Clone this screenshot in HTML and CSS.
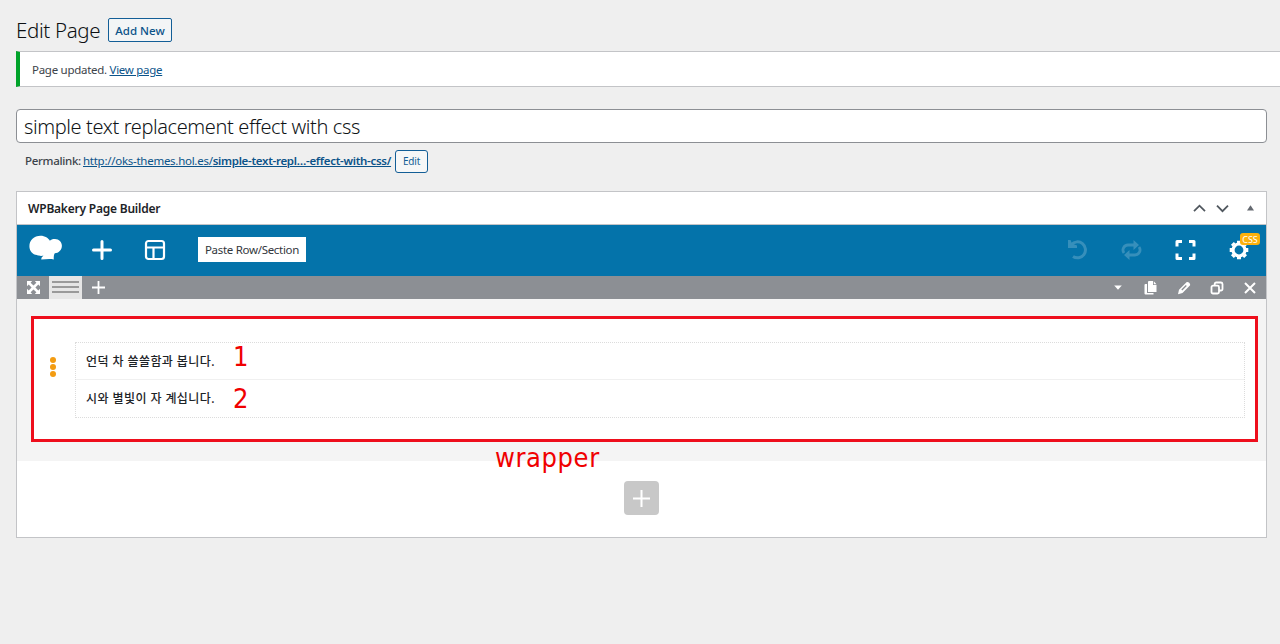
FILE: index.html
```html
<!DOCTYPE html>
<html lang="ko">
<head>
  <meta charset="UTF-8">
  <meta name="viewport" content="width=device-width, initial-scale=1.0">
  <title>Edit Page</title>
  <link rel="stylesheet" href="styles.css">
</head>
<body>
  <div class="heading">
    <h1>Edit Page</h1>
    <a class="add-new"><span>Add New</span></a>
  </div>

  <div class="notice"><p>Page updated. <a>View page</a></p></div>

  <div class="title-box"><span>simple text replacement effect with css</span></div>

  <div class="permalink">
    <strong>Permalink:</strong>
    <a class="url">http://oks-themes.hol.es/<b>simple-text-repl…-effect-with-css/</b></a>
    <button class="edit">Edit</button>
  </div>

  <div class="builder">
    <div class="builder-header">
      <h2>WPBakery Page Builder</h2>
      <svg class="handle" width="68" height="16" viewBox="0 0 68 16">
        <path d="M2 11.2 7.5 5.7 13 11.2M25 5.7 30.500 11.200 36 5.700" fill="none" stroke="#50575e" stroke-width="1.8"/>
        <path d="M58.500 5.200 62 10.500H55z" fill="#646970"/>
      </svg>
    </div>

    <div class="navbar">
      <div class="nav-item logo">
        <svg width="34" height="28" viewBox="0 0 34 28" fill="#fff">
          <path d="M11.500 1.800C16 1.800 19.500 4.300 20.900 6.800C22 5.200 24 4.800 26 4.900C30 5 32.900 8 32.900 11.800C32.900 16 29.500 19.200 25.800 19.300C24.800 20.600 24.600 22.600 24.800 25.600C21 24.700 17 25.300 12.300 25.600C12.200 24 13 22.700 14.500 21.800C12 22 9.500 22 8 21.100C3.500 20.500.4 16.700.4 12.200C.4 6.500 5.100 1.800 11.500 1.800Z"/>
        </svg>
      </div>
      <div class="nav-item">
        <svg width="20" height="20" viewBox="0 0 20 20" stroke="#fff" stroke-width="3" stroke-linecap="round"><path d="M10 1.500v17M1.500 10h17"/></svg>
      </div>
      <div class="nav-item layout">
        <svg width="22" height="22" viewBox="0 0 22 22" fill="none" stroke="#fff" stroke-width="2.200"><rect x="2" y="2" width="18" height="18" rx="2.500"/><path d="M2 8.500h18M9.500 8.500V20"/></svg>
      </div>
      <a class="paste"><span>Paste Row/Section</span></a>
      <div class="nav-right">
        <div class="nav-item dim">
          <svg width="22" height="22" viewBox="-1 0 22 22" fill="none" stroke="#fff" stroke-width="3"><path d="M4.500 5.500A8 8 0 1 1 6 17.500"/><path d="M1 1h2.500l1.500 3.500 5 2V9H1z" fill="#fff" stroke="none"/></svg>
        </div>
        <div class="nav-item dim">
          <svg width="22" height="20" viewBox="-.5 0 22 20" fill="none" stroke="#fff" stroke-width="2.800"><path d="M14.500 5H7.500A5 5 0 0 0 3.500 13M8 15h6.500A5 5 0 0 0 18.500 7"/><path d="M13 0v10l5.500-5zM9 10v10l-5.500-5z" fill="#fff" stroke="none"/></svg>
        </div>
        <div class="nav-item">
          <svg width="22" height="22" viewBox="-.5 0 22 22" fill="none" stroke="#fff" stroke-width="3" stroke-linejoin="round"><path d="M2.500 7.500v-5H7.500M14.500 2.500h5v5M19.500 14.500v5h-5M7.500 19.500h-5v-5"/></svg>
        </div>
        <div class="nav-item settings">
          <svg width="20" height="20" viewBox="-10 -10 20 20" fill="none" stroke="#fff"><circle r="6" stroke-width="3.200"/><path d="M0-9.300V-7M0 7v2.300M-9.300 0H-7M7 0h2.300M-6.600-6.600-5-5M5 5l1.600 1.600M-6.600 6.600-5 5M5-5l1.600-1.600" stroke-width="4"/></svg>
          <span class="badge">CSS</span>
        </div>
      </div>
    </div>

    <div class="row-controls">
      <div class="control">
        <svg width="13" height="13" viewBox="0 0 13 13" fill="#fff"><path d="M0 0h5.200L3.600 1.700 6.500 4.600 9.400 1.700 7.800 0H13v5.200L11.300 3.600 8.400 6.500l2.900 2.900L13 7.800V13H7.800l1.600-1.700-2.900-2.900-2.900 2.900L5.200 13H0V7.800l1.700 1.600 2.900-2.900-2.900-2.900L0 5.200z"/></svg>
      </div>
      <div class="control active"><i></i><i></i><i></i></div>
      <div class="control add">
        <svg width="13" height="13" viewBox="0 0 13 13" stroke="#fff" stroke-width="1.800"><path d="M6.500 0v13M0 6.500h13"/></svg>
      </div>
      <div class="controls-right">
        <div class="control"><svg width="8" height="5" viewBox="0 0 8 5" fill="#fff"><path d="M.2.500h7.600L4 4.800z"/></svg></div>
        <div class="control">
          <svg width="13" height="14" viewBox="0 0 13 14" fill="#fff"><path d="M5 0h4v4h3.500v7H4V1a1 1 0 0 1 1-1zM9.800.2v3h2.700zM.5 4a1 1 0 0 1 1-1H3v9h6.500v1.500h-8a1 1 0 0 1-1-1z"/></svg>
        </div>
        <div class="control">
          <svg width="14" height="14" viewBox="0 0 14 14" fill="#fff"><path fill-rule="evenodd" d="M9.500 1.300c1.400-1.200 4.600 1.600 3.400 3.100L5.500 12 1 13.200l1-4.500zM8.800 4 4.300 8.500l1 1L9.800 5z"/></svg>
        </div>
        <div class="control">
          <svg width="14" height="14" viewBox="0 0 14 14" fill="none" stroke="#fff" stroke-width="1.800"><rect x="1.500" y="4.700" width="7.500" height="7.800" rx="1.500"/><path d="M4.700 4.700V3a1.500 1.500 0 0 1 1.500-1.500h4.500A1.700 1.700 0 0 1 12.500 3v5a1.500 1.500 0 0 1-1.500 1.500H9"/></svg>
        </div>
        <div class="control">
          <svg width="12" height="12" viewBox="0 0 12 12" stroke="#fff" stroke-width="2"><path d="M1 1l10 10M11 1 1 11"/></svg>
        </div>
      </div>
    </div>

    <div class="content">
      <div class="wrapper">
        <div class="drag"><i></i><i></i><i></i></div>
        <div class="texts">
          <div class="text"><p>언덕 차 쓸쓸함과 봅니다.</p><span class="num first">1</span></div>
          <div class="text"><p>시와 별빛이 자 계십니다.</p><span class="num second">2</span></div>
        </div>
        <span class="wrapper-label">wrapper</span>
      </div>
    </div>

    <div class="builder-footer">
      <div class="add-element">
        <svg width="19" height="19" viewBox="0 0 19 19" stroke="#fff" stroke-width="2"><path d="M9.500 1v17M1 9.500h17"/></svg>
      </div>
    </div>
  </div>
</body>
</html>
```
FILE: styles.css
```css
* {
  box-sizing: border-box;
}
body {
  margin: 0;
  padding: 18px 0 0 16px;
  height: 644px;
  overflow: hidden;
  background: #efefef;
  color: #3c434a;
  font-family: "Noto Sans", "Noto Sans CJK KR", sans-serif;
  font-size: 12px;
}
h1, h2, p {
  margin: 0;
}
svg {
  display: block;
}
a {
  color: #0b5389;
  text-decoration: underline;
}
.heading {
  display: flex;
  align-items: center;
  height: 24px;
}
h1 {
  width: 92px;
  font-size: 20.5px;
  font-weight: 350;
  line-height: 24px;
  color: #0c0f12;
  letter-spacing: -0.35px;
  white-space: nowrap;
}
.add-new {
  width: 64px;
  height: 24px;
  border: 1px solid #135e96;
  border-radius: 2px;
  background: #f3f5f6;
  font-size: 11.5px;
  font-weight: 500;
  line-height: 23px;
  text-align: center;
  text-decoration: none;
}
.notice {
  height: 36px;
  margin-top: 9px;
  padding-left: 12px;
  border: 1px solid #c3c4c7;
  border-left: 4px solid #00a32a;
  border-right: 0;
  background: #fff;
  font-size: 11.5px;
  line-height: 35px;
  letter-spacing: -0.28px;
}
.title-box {
  width: 1251px;
  height: 34px;
  margin-top: 22px;
  padding-left: 7px;
  border: 1px solid #8c8f94;
  border-radius: 4px;
  background: #fff;
  color: #101417;
  font-size: 20px;
  font-weight: 350;
  line-height: 33px;
  letter-spacing: -0.39px;
}
.permalink {
  display: flex;
  align-items: center;
  height: 24px;
  margin-top: 6px;
  padding-left: 9px;
  font-size: 11.5px;
  line-height: 22px;
}
.permalink strong {
  width: 58px;
  font-weight: 500;
  letter-spacing: -0.3px;
  white-space: nowrap;
}
.url {
  width: 312px;
  letter-spacing: -0.27px;
  white-space: nowrap;
}
.url b {
  font-weight: 600;
  letter-spacing: -0.29px;
}
.edit {
  width: 33px;
  height: 23px;
  padding: 0;
  border: 1px solid #135e96;
  border-radius: 3px;
  background: #f6f7f7;
  color: #135e96;
  font-family: inherit;
  font-size: 10px;
  letter-spacing: -0.2px;
}
.builder {
  width: 1251px;
  height: 347px;
  margin-top: 18px;
  border: 1px solid #c3c4c7;
  background: #fff;
}
.builder-header {
  display: flex;
  align-items: center;
  justify-content: space-between;
  height: 33px;
  padding: 0 6px 0 11px;
  border-bottom: 1px solid #c3c4c7;
}
h2 {
  font-size: 12px;
  font-weight: 600;
  color: #1d2327;
  letter-spacing: -0.22px;
}
.navbar {
  display: flex;
  height: 51px;
  padding-bottom: 2px;
  background: #0473aa;
}
.nav-item {
  display: flex;
  align-items: center;
  justify-content: center;
  width: 54px;
}
.nav-item.logo {
  width: 58px;
  padding-bottom: 3px;
}
.nav-item.layout {
  width: 53px;
  padding-right: 1px;
}
.dim svg {
  opacity: 0.2;
}
.paste {
  align-self: center;
  width: 108px;
  height: 25px;
  margin-left: 16px;
  background: #fff;
  color: #32373c;
  font-size: 11.5px;
  line-height: 26px;
  letter-spacing: -0.3px;
  text-align: center;
  text-decoration: none;
  white-space: nowrap;
}
.nav-right, .controls-right {
  display: flex;
  margin-left: auto;
}
.settings {
  position: relative;
}
.badge {
  position: absolute;
  top: 8px;
  left: 28px;
  width: 20px;
  height: 12px;
  border-radius: 3px;
  background: #fbb10d;
  color: #fff;
  font-size: 9px;
  line-height: 13px;
  text-align: center;
}
.row-controls {
  display: flex;
  height: 23px;
  background: #8c8f94;
}
.control {
  display: flex;
  align-items: center;
  justify-content: center;
  width: 33px;
}
.control:first-child {
  width: 32px;
}
.controls-right .control {
  width: 33px;
}
.control.active {
  flex-direction: column;
  gap: 3px;
  padding-bottom: 1px;
  background: #e6e6e6;
}
.active i {
  width: 27px;
  height: 2px;
  background: #9a9a9a;
}
.content {
  height: 162px;
  padding: 17px 8px 0 14px;
  background: #f4f4f4;
}
.wrapper {
  position: relative;
  display: flex;
  height: 126px;
  padding: 23px 10px 0 16px;
  border: 3px solid #ee0e1c;
  background: #fff;
}
.drag {
  display: flex;
  flex-direction: column;
  gap: 1px;
  width: 25px;
  padding-top: 15px;
}
.drag i {
  width: 6px;
  height: 6px;
  border-radius: 50%;
  background: #f39c12;
}
.texts {
  flex: 1;
  height: 76px;
  border: 1px dotted #dcdcdc;
}
.text {
  display: flex;
  align-items: center;
  height: 37px;
  padding: 0 0 1px 10px;
  color: #1d2327;
  font-weight: 500;
}
.text + .text {
  margin-top: -1px;
  height: 38px;
  border-top: 1px solid #f0f0f0;
}
.text p {
  width: 147px;
  letter-spacing: 0.42px;
  white-space: nowrap;
}
.num, .wrapper-label {
  color: #f00000;
  font-family: "DejaVu Sans Condensed", "DejaVu Sans", sans-serif;
  font-size: 27px;
  font-stretch: condensed;
  font-weight: 400;
  line-height: 30px;
}
.num.first {
  margin-bottom: 9px;
}
.num.second {
  margin-top: 2px;
}
.wrapper-label {
  position: absolute;
  top: 124px;
  left: 461px;
  letter-spacing: 0.6px;
}
.builder-footer {
  display: flex;
  justify-content: center;
  padding-top: 20px;
}
.add-element {
  display: flex;
  align-items: center;
  justify-content: center;
  width: 35px;
  height: 34px;
  border-radius: 4px;
  background: #c8c8c8;
}
```
